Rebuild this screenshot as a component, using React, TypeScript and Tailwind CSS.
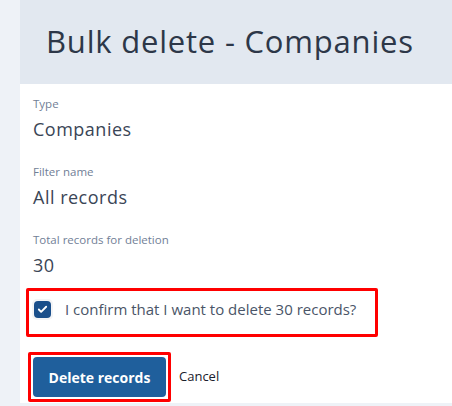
import { Check } from 'lucide-react';

const fields = [
  { label: 'Type', value: 'Companies' },
  { label: 'Filter name', value: 'All records' },
  { label: 'Total records for deletion', value: '30' },
];

export default function App() {
  return (
    <div
      className="w-[452px] h-[406px] bg-[#eef2f7] pl-[20px] overflow-hidden"
      style={{ fontFamily: '"Open Sans", "Liberation Sans", sans-serif' }}
    >
      <div className="bg-white h-[403px] flex flex-col">
        {/* header */}
        <div className="h-[84px] bg-[#e2e8f0] flex items-center pl-[26px] pb-[2px]">
          <h1 className="text-[31px] leading-none text-[#2d3748] tracking-[0.8px]">Bulk delete - Companies</h1>
        </div>

        <div className="pl-[13px] pt-[12px]">
          {fields.map(f => (
            <div key={f.label} className="mb-[23px] last:mb-0">
              <div className="text-[11.5px] leading-[16px] text-[#718096]">{f.label}</div>
              <div className="text-[18px] leading-[24px] text-[#3a4556] mt-[5px] tracking-[0.5px]">{f.value}</div>
            </div>
          ))}
        </div>

        <div className="ml-[6px] mt-[11px] w-[352px] h-[49px] border-[3px] border-[#ff0000] rounded-[2px] flex items-start pt-[8px] pl-[3px]">
          <div className="p-[2px] rounded-[5px] bg-[#f3f4f6]">
            <div className="w-[17px] h-[17px] rounded-[4px] bg-[#1a4f8b] flex items-center justify-center">
              <Check className="w-[11px] h-[11px] text-white" strokeWidth={4} />
            </div>
          </div>
          <span className="ml-[12px] text-[15px] leading-[20px] text-[#4a5568]">
            I confirm that I want to delete 30 records?
          </span>
        </div>

        <div className="flex items-center mt-[15px] ml-[8px]">
          <div className="border-[3px] border-[#ff0000] rounded-[2px] p-[2px] w-[143px] h-[50px]">
            <button className="w-full h-full rounded-[4px] bg-[#1f5f9c] text-white text-[14px] font-bold">
              Delete records
            </button>
          </div>
          <span className="ml-[8px] text-[13px] text-[#1a202c]">Cancel</span>
        </div>
      </div>
    </div>
  );
}
